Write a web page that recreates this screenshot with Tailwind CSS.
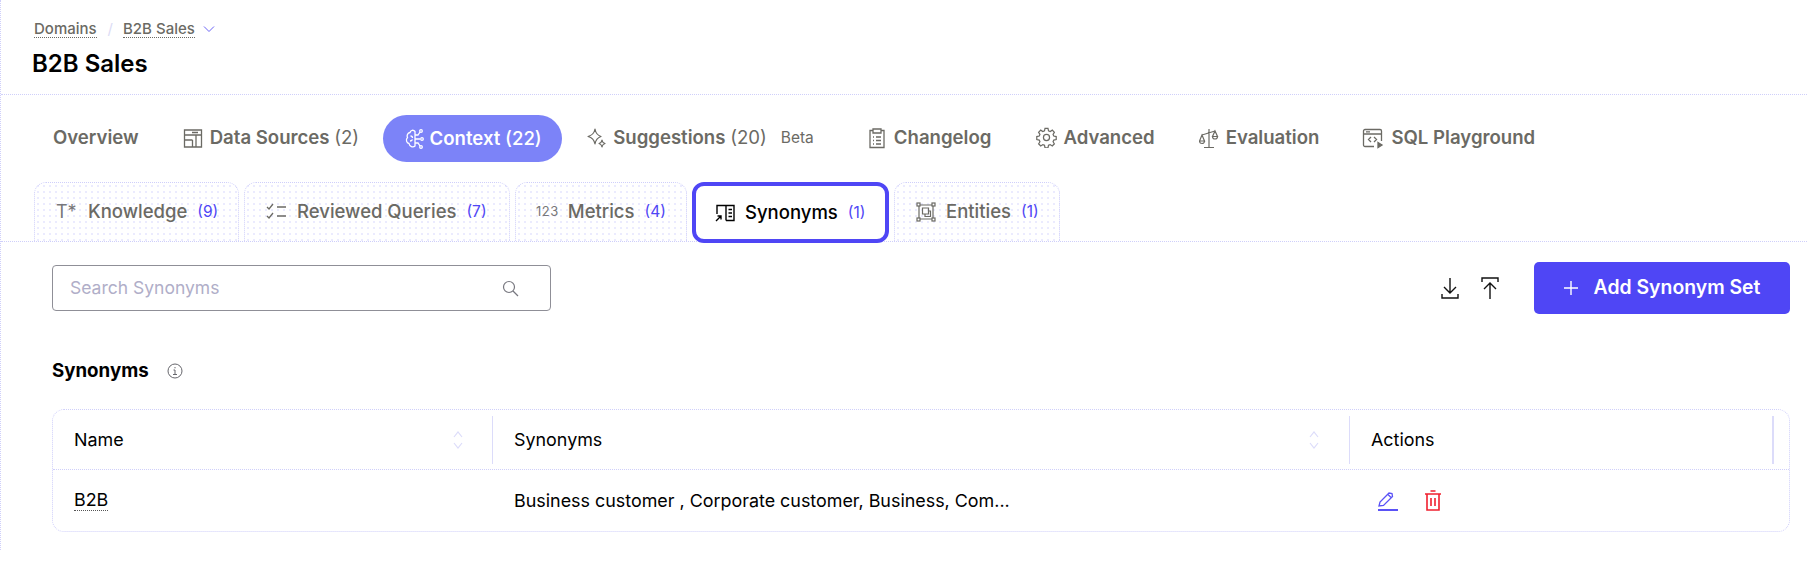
<!DOCTYPE html>
<html lang="en">
<head>
    <meta charset="UTF-8">
    <title>B2B Sales</title>
    <script src="https://cdn.jsdelivr.net/npm/@tailwindcss/browser@4"></script>
</head>
<body class="bg-white font-['Inter',sans-serif] overflow-hidden">
    <div class="h-[550px] border-l border-dotted border-[#cfcffa]">
        <!-- Header -->
        <header class="h-[95px] border-b border-dotted border-[#cfcffa] pl-[33px] pt-[20px]">
            <nav class="flex items-center h-[18px] text-[15px] font-medium text-[#6b6a64]">
                <a class="border-b border-dotted border-[#6b6a64] leading-[17px]">Domains</a>
                <span class="mx-[11px] text-[#dcdcf5] font-normal">/</span>
                <a class="border-b border-dotted border-[#6b6a64] leading-[17px] -ml-[1px]">B2B Sales</a>
                <svg class="ml-[7px] w-[14px] h-[14px] text-[#6a63f6]" viewBox="0 0 14 14" fill="none" stroke="currentColor" stroke-width="1"><path d="M2 4.500 7 9.500 12 4.500"/></svg>
            </nav>
            <h1 class="mt-[10px] text-[24px] leading-[32px] font-semibold text-black -ml-[2px]">B2B Sales</h1>
        </header>

        <!-- Main tabs -->
        <div class="flex items-center h-[47px] mt-[20px] ml-[32px] text-[18.600px] font-semibold text-[#6b6a64]">
            <a class="px-[20px] pb-[1px]">Overview</a>
            <a class="flex items-center gap-[7px] pl-[24px] pr-[24px] pb-[1px]">
                <svg class="w-[20px] h-[20px]" viewBox="0 0 20 20" fill="none" stroke="currentColor" stroke-width="1.300"><path d="M1.500 2h17v17h-17zM1.500 7h17M1.500 12h8M9.500 12v7M13 7v12M9 4.500h6"/></svg>
                <span>Data Sources <span class="font-normal">(2)</span></span>
            </a>
            <a class="flex items-center gap-[4px] h-[47px] w-[179px] justify-center rounded-full bg-[#7c83f8] text-white">
                <svg class="w-[22px] h-[22px]" viewBox="0 0 22 22" fill="none" stroke="currentColor" stroke-width="1.300"><path d="M11 3.500C9.500 1.500 6.500 2 6 4.500 3.500 5 2.500 7.500 3.500 9.500 1.500 11.500 2.500 15 5 15.500 5.500 18.500 9 20 11 18zM11 7h3l2-3M11 11h5M11 15h3l2 3M6.500 8c1 0 2 .5 2 2M6 13c1 0 2-.5 2.500-1.500"/><circle cx="17" cy="3" r="1.300"/><circle cx="18" cy="11" r="1.300"/><circle cx="17" cy="19" r="1.300"/></svg>
                <span>Context <span class="font-medium">(22)</span></span>
            </a>
            <a class="flex items-center gap-[6px] ml-[24px] pb-[1px]">
                <svg class="w-[21px] h-[22px]" viewBox="0 0 21 22" fill="none" stroke="currentColor" stroke-width="1.200" stroke-linejoin="round"><path d="M9 2c.7 4 2.300 6.300 6 7.500-3.700 1.200-5.300 3.500-6 7.500-.7-4-2.300-6.300-7-7.500 4.700-1.200 6.300-3.500 7-7.500z"/><path d="M16 13c.3 2 1.200 3 3 3.500-1.800.5-2.700 1.500-3 3.500-.3-2-1.200-3-3-3.500 1.800-.5 2.700-1.500 3-3.500z"/></svg>
                <span>Suggestions <span class="font-normal">(20)</span></span>
                <span class="ml-[8px] text-[15.500px] font-normal text-[#6b6a64]">Beta</span>
            </a>
            <a class="flex items-center gap-[7px] ml-[53px] pb-[1px]">
                <svg class="w-[20px] h-[22px]" viewBox="0 0 20 22" fill="none" stroke="currentColor" stroke-width="1.300"><path d="M6 3.500H3v17h14v-17h-3M6 2h8v4H6zM6 10h1M9 10h5M6 13.500h1M9 13.500h5M6 17h1M9 17h5"/></svg>
                <span>Changelog</span>
            </a>
            <a class="flex items-center gap-[6px] ml-[45px] pb-[1px]">
                <svg class="w-[21px] h-[21px]" viewBox="0 0 24 24" fill="none" stroke="currentColor" stroke-width="1.400"><path d="M10.300 2.500h3.400l.6 2.800 1.900.8 2.400-1.500 2.400 2.400-1.500 2.400.8 1.900 2.800.6v3.400l-2.800.6-.8 1.900 1.500 2.400-2.400 2.400-2.400-1.500-1.900.8-.6 2.800h-3.400l-.6-2.800-1.900-.8-2.400 1.500-2.400-2.400 1.500-2.400-.8-1.900-2.800-.6v-3.400l2.800-.6.8-1.900-1.500-2.400 2.400-2.400 2.400 1.500 1.900-.8z" transform="translate(0 -1)"/><circle cx="12" cy="12" r="3.500"/></svg>
                <span>Advanced</span>
            </a>
            <a class="flex items-center gap-[6px] ml-[44px] pb-[1px]">
                <svg class="w-[21px] h-[22px]" viewBox="0 0 21 22" fill="none" stroke="currentColor" stroke-width="1.200"><path d="M10 2v18M5 20.500h10M3 8l13-4M3 8l-2.500 6h5zM.5 14a2.500 2.500 0 0 0 5 0"/><path d="M16 4l-2.500 5.500h5zM13.500 9.500a2.500 2.500 0 0 0 5 0"/></svg>
                <span>Evaluation</span>
            </a>
            <a class="flex items-center gap-[7px] ml-[43px] pb-[1px]">
                <svg class="w-[22px] h-[22px]" viewBox="0 0 22 22" fill="none" stroke="currentColor" stroke-width="1.300"><path d="M12 19.500H3a1.500 1.500 0 0 1-1.500-1.500V4A1.500 1.500 0 0 1 3 2.500h15A1.500 1.500 0 0 1 19.500 4v10M1.500 7h18M4 4.800h4M9 10l-2.500 2.500L9 15M12 10l2.500 2.500L12 15"/><path d="M16 15.500l4 2.500-4 2.500z" fill="currentColor"/></svg>
                <span>SQL Playground</span>
            </a>
        </div>

        <!-- Sub tabs -->
        <div class="flex items-end h-[61px] mt-[19px] pl-[33px] border-b border-dotted border-[#cfcffa] text-[18.500px] font-medium text-[#6b6a64] relative">
            <a class="flex items-center h-[59px] w-[205px] pl-[21px] pb-[1px] rounded-t-[12px] border border-b-0 border-dotted border-[#cfcffa] bg-[radial-gradient(#ebebfe_1px,transparent_1px)] bg-size-[6px_6px]">
                <span class="w-[31px] text-[18px] font-normal text-[#77777a]">T*</span>
                <span class="ml-[1px]">Knowledge</span>
                <span class="ml-[10px] text-[15.500px] font-normal text-[#4f46f5]">(9)</span>
            </a>
            <a class="flex items-center h-[59px] w-[266px] ml-[5px] pl-[21px] pb-[1px] rounded-t-[12px] border border-b-0 border-dotted border-[#cfcffa] bg-[radial-gradient(#ebebfe_1px,transparent_1px)] bg-size-[6px_6px]">
                <svg class="w-[21px] h-[18px]" viewBox="0 0 21 18" fill="none" stroke="currentColor" stroke-width="1.300"><path d="M1 4l2 2 4-5M1 13l2 2 4-5M11 4h9M11 13h9"/></svg>
                <span class="ml-[10px]">Reviewed Queries</span>
                <span class="ml-[10px] text-[15.500px] font-normal text-[#4f46f5]">(7)</span>
            </a>
            <a class="flex items-center h-[59px] w-[172px] ml-[5px] pl-[20px] pb-[1px] rounded-t-[12px] border border-b-0 border-dotted border-[#cfcffa] bg-[radial-gradient(#ebebfe_1px,transparent_1px)] bg-size-[6px_6px]">
                <span class="text-[13px] font-normal tracking-[0.5px] text-[#77777a]">123</span>
                <span class="ml-[9px]">Metrics</span>
                <span class="ml-[10px] text-[15.500px] font-normal text-[#4f46f5]">(4)</span>
            </a>
            <a class="flex items-center h-[61px] w-[197px] ml-[5px] -mb-[2px] pl-[19px] rounded-[12px] border-[4px] border-[#4f46f5] bg-white text-black z-10">
                <svg class="w-[20px] h-[18px]" viewBox="0 0 20 18" fill="none" stroke="currentColor" stroke-width="1.400"><path d="M2 10V1.500h9V16.500M11 1.500h8v15h-8M13.500 5.500h3.500M13.500 9h3.500M13.500 12.500h3.500M1 17l5-5M2.500 12h3.500v3.500"/></svg>
                <span class="ml-[10px]">Synonyms</span>
                <span class="ml-[10px] text-[15.500px] font-normal text-[#4f46f5]">(1)</span>
            </a>
            <a class="flex items-center h-[59px] w-[166px] ml-[5px] pl-[21px] pb-[1px] rounded-t-[12px] border border-b-0 border-dotted border-[#cfcffa] bg-[radial-gradient(#ebebfe_1px,transparent_1px)] bg-size-[6px_6px]">
                <svg class="w-[20px] h-[20px]" viewBox="0 0 20 20" fill="none" stroke="currentColor" stroke-width="1.200"><path d="M3 3h14v14H3zM6.500 6h6v6h-6zM9 12v2.500h5.500V9H12.500"/><rect x="1" y="1" width="3" height="3" fill="#fff"/><rect x="16" y="1" width="3" height="3" fill="#fff"/><rect x="1" y="16" width="3" height="3" fill="#fff"/><rect x="16" y="16" width="3" height="3" fill="#fff"/></svg>
                <span class="ml-[10px]">Entities</span>
                <span class="ml-[10px] text-[15.500px] font-normal text-[#4f46f5]">(1)</span>
            </a>
        </div>

        <div class="pl-[51px] pr-[17px]">
            <!-- Toolbar -->
            <div class="flex items-center h-[52px] mt-[20px]">
                <div class="flex items-center justify-between w-[499px] h-[46px] pl-[17px] pr-[31px] rounded-[4px] border border-[#8f8f97]">
                    <span class="text-[17.500px] pt-[1px] text-[#b0aec8]">Search Synonyms</span>
                    <svg class="w-[17px] h-[17px] text-[#77777f]" viewBox="0 0 17 17" fill="none" stroke="currentColor" stroke-width="1.200"><circle cx="7" cy="7" r="5.500"/><path d="M11 11l5 5"/></svg>
                </div>
                <div class="flex items-center ml-auto">
                    <svg class="w-[18px] h-[22px]" viewBox="0 0 18 22" fill="none" stroke="#111" stroke-width="1.400"><path d="M9 1v15M3 10l6 6 6-6M1 17v4h16v-4"/></svg>
                    <svg class="w-[18px] h-[22px] ml-[22px]" viewBox="0 0 18 22" fill="none" stroke="#111" stroke-width="1.400"><path d="M9 6v16M3 12l6-6 6 6M1 5V1h16v4"/></svg>
                    <button class="flex items-center justify-center w-[256px] h-[52px] ml-[35px] rounded-[5px] bg-[#4f46f5] text-[19.400px] font-semibold text-white">
                        <svg class="w-[14px] h-[14px]" viewBox="0 0 14 14" fill="none" stroke="currentColor" stroke-width="1.400"><path d="M7 0v14M0 7h14"/></svg>
                        <span class="ml-[16px]">Add Synonym Set</span>
                    </button>
                </div>
            </div>

            <!-- Section title -->
            <div class="flex items-center mt-[45px] h-[24px]">
                <h2 class="text-[18.700px] font-bold text-black">Synonyms</h2>
                <svg class="ml-[18px] w-[16px] h-[16px] text-[#66666c]" viewBox="0 0 16 16" fill="none" stroke="currentColor" stroke-width="1"><circle cx="8" cy="8" r="7"/><path d="M6.500 7H8v4.500M6 11.500h4M8 4v1.300"/></svg>
            </div>

            <!-- Table -->
            <div class="mt-[26px] rounded-[12px] border border-dotted border-[#cfcffa] text-[17.900px] text-black">
                <div class="flex items-center h-[60px] border-b border-dotted border-[#cfcffa]">
                    <div class="flex items-center justify-between w-[440px] h-[48px] pl-[21px] pr-[29px] border-r border-[#dcdcfa]">
                        <span class="pt-[1px]">Name</span>
                        <svg class="w-[10px] h-[20px] text-[#dcdcfa]" viewBox="0 0 10 20" fill="none" stroke="currentColor" stroke-width="1.200"><path d="M1 7l4-5 4 5M1 13l4 5 4-5"/></svg>
                    </div>
                    <div class="flex items-center justify-between w-[857px] h-[48px] pl-[21px] pr-[30px] border-r border-[#dcdcfa]">
                        <span class="pt-[1px]">Synonyms</span>
                        <svg class="w-[10px] h-[20px] text-[#dcdcfa]" viewBox="0 0 10 20" fill="none" stroke="currentColor" stroke-width="1.200"><path d="M1 7l4-5 4 5M1 13l4 5 4-5"/></svg>
                    </div>
                    <div class="flex items-center flex-1 h-[48px] pl-[21px] mr-[15px] border-r-2 border-[#dcdcfa]">
                        <span class="pt-[1px]">Actions</span>
                    </div>
                </div>
                <div class="flex items-center h-[61px]">
                    <div class="w-[440px] pl-[21px]"><span class="border-b border-dotted border-[#555]">B2B</span></div>
                    <div class="w-[857px] pl-[21px] pt-[1px] truncate">Business customer , Corporate customer, Business, Com...</div>
                    <div class="flex items-center pl-[27px]">
                        <svg class="w-[21px] h-[20px] text-[#5a52f6]" viewBox="0 0 21 20" fill="none" stroke="currentColor" stroke-width="1.300"><path d="M2 15l1-4L12 2l3 .5.5 3L6.500 14.500zM11 3.500l3.500 3.500"/><path d="M1 19h20" stroke-width="2"/></svg>
                        <svg class="ml-[26px] w-[18px] h-[21px] text-[#f0202f]" viewBox="0 0 18 21" fill="none" stroke="currentColor" stroke-width="1.600"><path d="M1 4h16M6.500 1h5M3 4v16h12V4M7 8v8M11 8v8"/></svg>
                    </div>
                </div>
            </div>
        </div>
    </div>
</body>
</html>
